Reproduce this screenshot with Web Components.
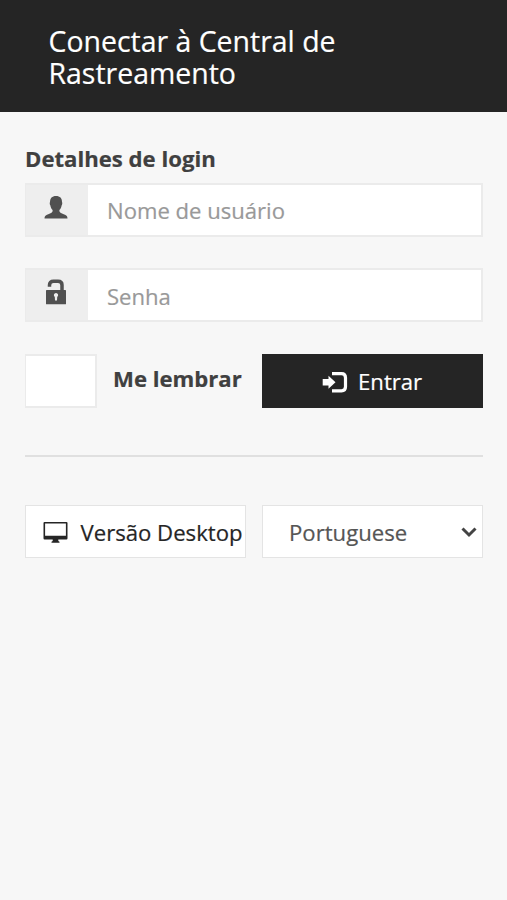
<!DOCTYPE html>
<html lang="pt">
<head>
<meta charset="utf-8">
<title>Conectar</title>
<style>
html,body{margin:0;height:100%;background:#f7f7f7}
body{font-family:"Open Sans","Noto Sans",sans-serif;font-size:22.15px;line-height:30px;color:#404040;-webkit-text-stroke:.2px}
</style>
</head>
<body>
<login-page></login-page>
<script>
const define = (name, html) => {
  const t = document.createElement('template');
  t.innerHTML = html;
  customElements.define(name, class extends HTMLElement {
    constructor() {
      super();
      this.attachShadow({mode: 'open'}).append(t.content.cloneNode(true));
    }
  });
};

define('page-header', `<style>
:host{display:block;box-sizing:border-box;height:111.6px;padding:26px 48px 0 48.5px;background:#252525;color:#fff}
h1{margin:0;font-size:28.45px;font-weight:400;line-height:31.5px;width:320px}
</style><h1><slot></slot></h1>`);

define('icon-field', `<style>
:host{display:flex;box-sizing:border-box;height:54px;border:2px solid #ebebeb;border-left-width:1px;background:#fff;color:#999}
.addon{width:62px;background:#eee;color:#505050;display:flex;justify-content:center}
.text{padding:9.5px 0 0 19px;line-height:32px;font-size:22.1px}
</style><div class="addon"><slot name="icon"></slot></div><div class="text"><slot></slot></div>`);

define('check-box', `<style>
:host{display:block;box-sizing:border-box;width:72px;height:54px;background:#fff;border:2px solid #ebebeb;border-left-width:1px}
</style>`);

define('action-button', `<style>
:host{display:flex;box-sizing:border-box;height:53px;background:#fff;border:1px solid #e4e4e4;color:#252525;white-space:nowrap;line-height:30px;padding-top:11px}
:host([primary]){height:54px;background:#252525;border-color:#252525;color:#fff}
</style><slot name="icon"></slot><span><slot></slot></span>`);

define('language-select', `<style>
:host{display:flex;box-sizing:border-box;height:53px;background:#fff;border:1px solid #e4e4e4;color:#555;justify-content:space-between;padding:11px 5px 0 26px;line-height:30px}
svg{display:block;margin-top:10px}
</style><span><slot></slot></span><svg width="16" height="12" viewBox="0 0 16 12" fill="none" stroke="#444" stroke-width="3"><path d="M1.5 1.5L8 8L14.5 1.5"/></svg>`);

define('login-page', `<style>
:host{display:block}
main{padding:31.4px 24px 0 25px}
.label{font-weight:700;line-height:30px;height:40px;color:#404040}
icon-field+icon-field{margin-top:31.5px}
.row{display:grid;grid-template-columns:221px 221px;column-gap:16px}
.remember{display:flex;gap:16px}
.remember b{padding-top:9px;white-space:nowrap}
hr{margin:47px 0 48px;border:0;height:2px;background:#e0e0e0}
svg{display:block;flex:none}
.user{margin:11px 2px 0 0}.lock{margin:9px 2px 0 0}
.enter{margin:6px 10.5px 0 58.5px}
.screen{margin:5px 12.5px 0 17px}
</style>
<page-header>Conectar à Central de Rastreamento</page-header>
<main>
<div class="label">Detalhes de login</div>
<icon-field><svg slot="icon" class="user" width="24" height="24" viewBox="0 0 24 24" fill="currentColor"><path d="M12 0C8 0 6 2.3 6 6C5.5 6.5 5.7 9 6.4 9.5C6.7 11.5 7.6 13 8.6 14V15.2C8 17 5.5 17.5 3 18.7C1 19.7.6 20.5.5 22.4H23.5C23.4 20.5 23 19.7 21 18.7C18.5 17.5 16 17 15.4 15.2V14C16.4 13 17.3 11.5 17.6 9.5C18.3 9 18.5 6.5 18 6C18 2.3 16 0 12 0Z"/></svg>Nome de usuário</icon-field>
<icon-field><svg slot="icon" class="lock" width="22" height="26" viewBox="0 0 22 26"><path d="M4.5 7.7V6Q4.5 2.2 8.5 2.2H13Q17 2.2 17 6V12" fill="none" stroke="currentColor" stroke-width="3.5"/><rect x="1" y="11" width="20" height="14.3" rx=".6" fill="currentColor"/><path d="M11 14a2.2 2.2 0 0 1 1.2 4L12 21.5H10L9.8 18A2.2 2.2 0 0 1 11 14Z" fill="#eee"/></svg>Senha</icon-field>
<div class="row" style="margin-top:31.5px">
<div class="remember"><check-box></check-box><b>Me lembrar</b></div>
<action-button primary><svg slot="icon" class="enter" width="26" height="22" viewBox="0 0 26 22"><path d="M10 1.7H19.5Q23.5 1.7 23.5 5.7V14.8Q23.5 18.8 19.5 18.8H10" fill="none" stroke="currentColor" stroke-width="3.2"/><path d="M.7 7H6.5V3.8L13.5 10.3L6.5 16.8V13.6H.7Z" fill="currentColor"/></svg>Entrar</action-button>
</div>
<hr>
<div class="row">
<action-button><svg slot="icon" class="screen" width="25" height="22" viewBox="0 0 25 22" fill="currentColor"><path fill-rule="evenodd" d="M1.5 0H23.5Q24.5 0 24.5 1V16.2Q24.5 17.4 23.5 17.4H15.3V19L16.5 19.7V20.7H8.5V19.7L9.7 19V17.4H1.5Q.5 17.4.5 16.2V1Q.5 0 1.5 0ZM2.1 1.6V13.8H22.9V1.6Z"/></svg>Versão Desktop</action-button>
<language-select>Portuguese</language-select>
</div>
</main>`);
</script>
</body>
</html>
